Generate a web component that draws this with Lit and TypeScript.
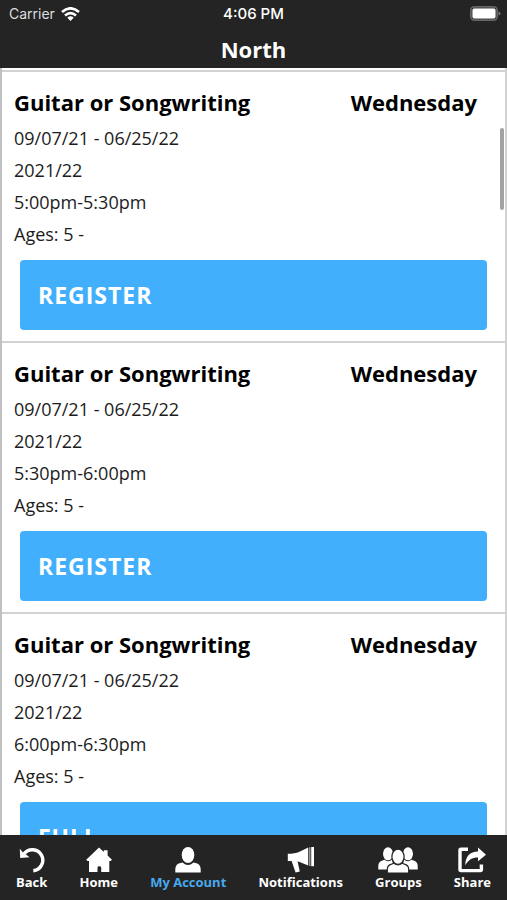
import { LitElement, html, css, svg } from "lit";
import { customElement, property } from "lit/decorators.js";

interface Session {
  name: string;
  day: string;
  dates: string;
  season: string;
  time: string;
  ages: string;
  action: string;
}

const base = {
  name: "Guitar or Songwriting",
  day: "Wednesday",
  dates: "09/07/21 - 06/25/22",
  season: "2021/22",
  ages: "Ages: 5 -",
};

const sessions: Session[] = [
  { ...base, time: "5:00pm-5:30pm", action: "Register" },
  { ...base, time: "5:30pm-6:00pm", action: "Register" },
  { ...base, time: "6:00pm-6:30pm", action: "Full" },
];

const icons = {
  back: svg`<svg width="26" height="26" viewBox="0 0 26 26" aria-hidden="true">
    <path d="M5 6.800A10.500 10.500 0 1 1 14.300 23.700" fill="none" stroke="#fff" stroke-width="3.400"/>
    <path d="M.8 1.800L4 5.500L7 7.500L10.500 10.200L1.200 11Z" fill="#fff"/></svg>`,
  home: svg`<svg width="26" height="26" viewBox="0 0 26 26" aria-hidden="true">
    <path d="M13 .5L17.800 5V3.200H21.600V8.500L26 12.800L24.600 14H23.300V25H15.200V20.500Q15.200 19.200 13.300 19.200Q11.500 19.200 11.500 20.500V25H3V14H1.500L.2 12.800Z" fill="#fff"/></svg>`,
  account: svg`<svg width="26" height="26" viewBox="0 0 26 26" aria-hidden="true">
    <ellipse cx="13" cy="8" rx="6.300" ry="8" fill="#fff"/>
    <path d="M.3 25.500V22.500Q.3 17.500 4.500 16.300L7.500 15.400Q13 20.600 18.500 15.400L21.500 16.300Q25.700 17.500 25.700 22.500V25.500Z" fill="#fff"/></svg>`,
  bell: svg`<svg width="28" height="26" viewBox="0 0 28 26" aria-hidden="true">
    <path d="M.8 6.800Q8 6.800 12 5L21.200.6V18.600L12 14.700L10.600 14.600L12.800 24.600L8.600 25.600L4.600 14H.8Z" fill="#fff"/>
    <path d="M22 .2H23.500V19H22Z" fill="#999"/>
    <path d="M24.200 0H27V19.200H24.200Z" fill="#fff"/></svg>`,
  groups: svg`<svg width="40" height="26" viewBox="0 0 40 26" aria-hidden="true">
    <g fill="#fff"><ellipse cx="10" cy="6.800" rx="5" ry="6.500"/><ellipse cx="30" cy="6.800" rx="5" ry="6.500"/>
    <path d="M.3 22.500V19Q.3 14.500 4.500 13.500L6.500 12.700Q11 16 14 12.500L16 22.500ZM39.700 22.500V19Q39.700 14.500 35.500 13.500L33.500 12.700Q29 16 26 12.500L24 22.500Z"/></g>
    <g fill="#fff" stroke="#242424" stroke-width="1.200"><path d="M9.300 26V22.500Q9.300 18.200 13.500 17.200L16 16.300Q20 19.500 24 16.300L26.500 17.200Q30.700 18.200 30.700 22.500V26Z"/>
    <ellipse cx="20" cy="9.800" rx="6.100" ry="7.600"/></g></svg>`,
  share: svg`<svg width="28" height="26" viewBox="0 0 28 26" aria-hidden="true">
    <path d="M10 2.200H3Q2 2.200 2 3.200V22.600Q2 23.600 3 23.600H22.400Q23.400 23.600 23.400 22.600V17.500" fill="none" stroke="#fff" stroke-width="3.400"/>
    <path d="M7.300 18.200C7.300 9.500 12 4.600 20 4.500V.6L28 7.700L20 14.200V10.600C14 10.600 10.500 13 7.300 18.200Z" fill="#fff"/></svg>`,
};

const tabs = [
  { label: "Back", icon: icons.back, active: false },
  { label: "Home", icon: icons.home, active: false },
  { label: "My Account", icon: icons.account, active: true },
  { label: "Notifications", icon: icons.bell, active: false },
  { label: "Groups", icon: icons.groups, active: false },
  { label: "Share", icon: icons.share, active: false },
];

@customElement("session-card")
class SessionCard extends LitElement {
  @property({ attribute: false }) session!: Session;

  static styles = css`
    :host {
      display: block;
      border-top: 2px solid #d2d2d2;
      padding: 14px 12px 11px;
    }
    .head {
      display: flex;
      justify-content: space-between;
      padding-right: 16px;
      margin-bottom: 4px;
    }
    .title,
    .day {
      margin: 0;
      font-size: 22px;
      line-height: 32px;
      font-weight: 700;
      color: #000;
    }
    .line {
      margin: 0;
      font-size: 18px;
      line-height: 32px;
    }
    .action {
      display: block;
      box-sizing: border-box;
      width: calc(100% - 12px);
      height: 70px;
      margin: 10px 6px 0;
      padding: 0 18px;
      border: 0;
      border-radius: 4px;
      background: #41affc;
      color: #fff;
      font: 700 23px "Open Sans", sans-serif;
      letter-spacing: 1px;
      text-align: left;
      text-transform: uppercase;
    }
  `;

  render() {
    const s = this.session;
    return html`
      <div class="head">
        <h2 class="title">${s.name}</h2>
        <p class="day">${s.day}</p>
      </div>
      <p class="line">${s.dates}</p>
      <p class="line">${s.season}</p>
      <p class="line">${s.time}</p>
      <p class="line">${s.ages}</p>
      <button class="action" type="button">${s.action}</button>
    `;
  }
}

@customElement("app-root")
class AppRoot extends LitElement {
  static styles = css`
    :host {
      display: flex;
      flex-direction: column;
      height: 100vh;
      background: #fff;
      color: #1c1c1c;
      font-family: "Open Sans", sans-serif;
    }
    .top {
      flex: none;
      background: #242424;
      color: #fff;
    }
    .status {
      display: grid;
      grid-template-columns: 1fr auto 1fr;
      align-items: center;
      height: 27px;
      padding: 0 6px;
      font: 500 15px "Inter", sans-serif;
    }
    .carrier {
      display: flex;
      align-items: center;
      gap: 6px;
      padding-left: 3px;
      font-size: 14px;
      font-weight: 400;
      color: #ddd;
    }
    .battery {
      justify-self: end;
    }
    .heading {
      margin: 0;
      padding: 7px 0 4px;
      font-size: 22px;
      line-height: 30px;
      font-weight: 700;
      text-align: center;
    }
    .body {
      position: relative;
      flex: 1;
      min-height: 0;
      display: flex;
    }
    .list {
      flex: 1;
      overflow-y: auto;
      scrollbar-width: none;
      padding-top: 2px;
      border-left: 2px solid #c0c0c0;
      border-right: 2px solid #d2d2d2;
    }
    .thumb {
      position: absolute;
      top: 60px;
      right: 3px;
      width: 4px;
      height: 82px;
      border-radius: 2px;
      background: #a2a2a2;
    }
    .tabs {
      flex: none;
      display: flex;
      justify-content: space-between;
      padding: 12px 16px 9px;
      background: #242424;
    }
    .tab {
      display: flex;
      flex-direction: column;
      align-items: center;
      color: #fff;
      font-size: 13px;
      line-height: 18px;
      font-weight: 700;
      text-decoration: none;
    }
    .tab.active {
      color: #48a9ec;
    }
    .tab svg {
      display: block;
    }
  `;

  render() {
    return html`
      <header class="top">
        <div class="status">
          <span class="carrier">
            Carrier
            <svg width="19" height="14" viewBox="0 0 19 14" aria-hidden="true">
              <g fill="none" stroke="#fff" stroke-width="2.600">
                <path d="M1 5Q9.500-2.400 18 5" />
                <path d="M4 8.400Q9.500 3.700 15 8.400" />
              </g>
              <path d="M6.300 10.700Q9.500 8 12.700 10.700L9.500 14Z" fill="#fff" />
            </svg>
          </span>
          <span>4:06 PM</span>
          <svg class="battery" width="31" height="15" viewBox="0 0 31 15" aria-hidden="true">
            <rect x="0" y="0" width="28" height="15" rx="4.500" fill="#666" />
            <rect x="1.500" y="1.500" width="25" height="12" rx="3" fill="#444" />
            <rect x="2.500" y="2.500" width="23" height="10" rx="2" fill="#fff" />
            <path d="M28.500 5.500Q30.500 6 30.500 7.500Q30.500 9 28.500 9.500Z" fill="#777" />
          </svg>
        </div>
        <h1 class="heading">North</h1>
      </header>
      <main class="body">
        <div class="list">
          ${sessions.map((s) => html`<session-card .session=${s}></session-card>`)}
        </div>
        <div class="thumb"></div>
      </main>
      <nav class="tabs">
        ${tabs.map(
          (t) => html`<a class="tab ${t.active ? "active" : ""}" href="#">${t.icon}<span>${t.label}</span></a>`
        )}
      </nav>
    `;
  }
}
